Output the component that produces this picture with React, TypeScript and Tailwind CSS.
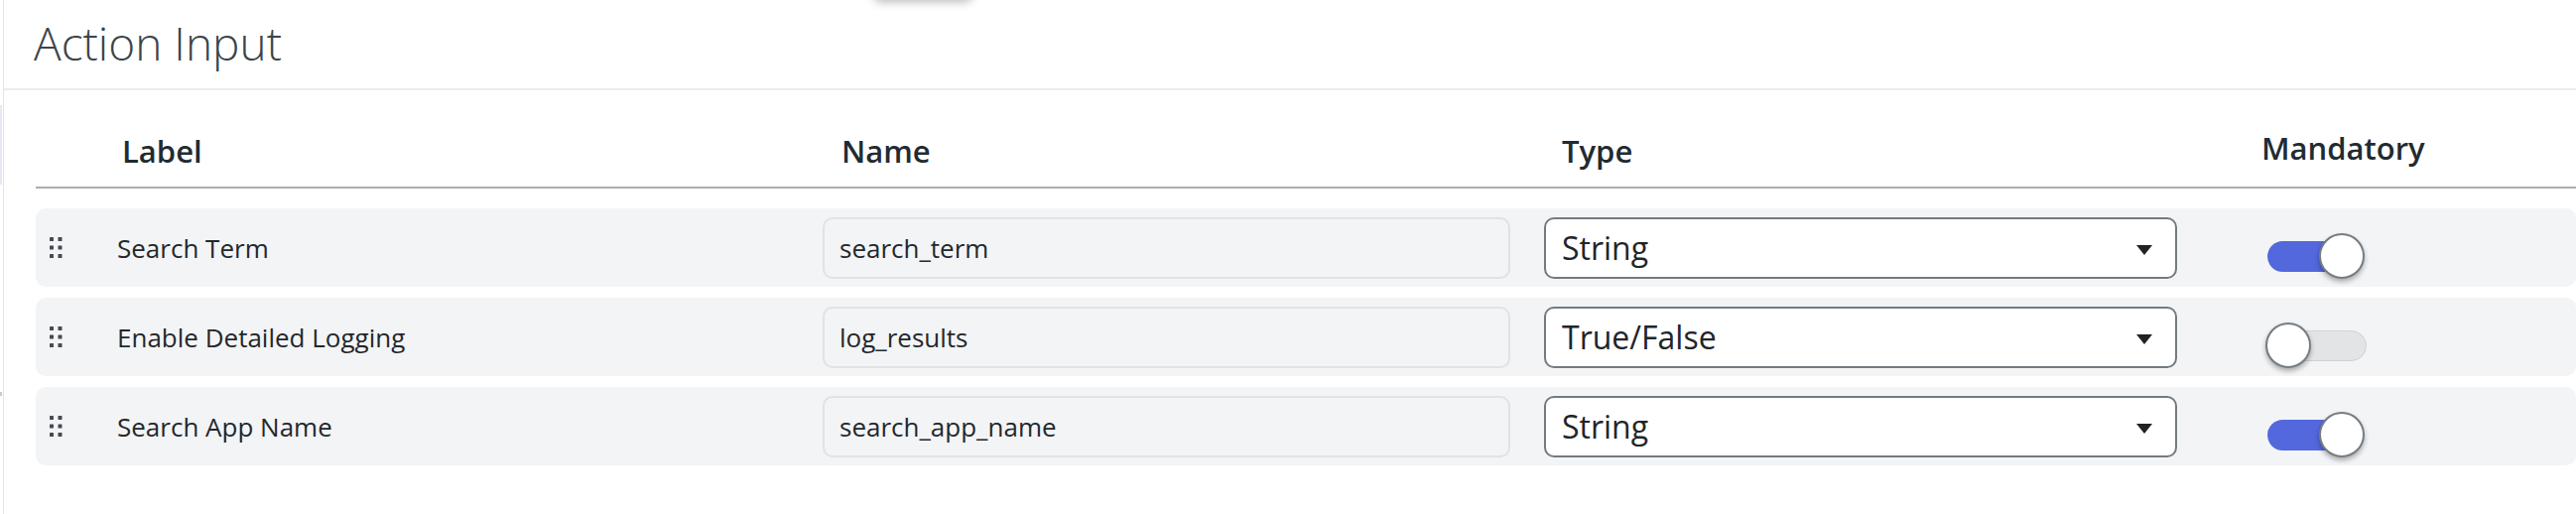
import React from "react";

type Row = { label: string; name: string; type: string; on: boolean };

const rows: Row[] = [
  { label: "Search Term", name: "search_term", type: "String", on: true },
  { label: "Enable Detailed Logging", name: "log_results", type: "True/False", on: false },
  { label: "Search App Name", name: "search_app_name", type: "String", on: true },
];

function Handle() {
  return (
    <svg width="13" height="21" viewBox="0 0 13 21" className="block">
      {[0, 8.5, 17].map((y) =>
        [0, 8.5].map((x) => (
          <rect key={`${x}-${y}`} x={x} y={y} width="4" height="4" rx="0.6" fill="#454b51" />
        ))
      )}
    </svg>
  );
}

function Caret() {
  return (
    <svg width="16" height="10" viewBox="0 0 16 10" className="block">
      <path d="M0 0 L16 0 L8 10 Z" fill="#1f2326" />
    </svg>
  );
}

function Toggle({ on }: { on: boolean }) {
  return (
    <div className="relative mt-[16px] h-[46px] w-[102px]">
      <div
        className={
          on
            ? "absolute left-[2px] top-[8px] h-[31px] w-[92px] rounded-full bg-[#5368dd]"
            : "absolute left-[2px] top-[8px] h-[31px] w-[100px] rounded-full border border-[#cfd1d3] bg-[#e3e4e6]"
        }
      />
      <div
        className={
          on
            ? "absolute left-[54px] top-0 h-[46px] w-[46px] rounded-full border-2 border-[#767d82] bg-white shadow-[0_3px_5px_rgba(0,0,0,0.3)]"
            : "absolute left-0 top-0 h-[46px] w-[46px] rounded-full border-2 border-[#767d82] bg-white shadow-[0_3px_5px_rgba(0,0,0,0.3)]"
        }
      />
    </div>
  );
}

export default function App() {
  return (
    <div className="relative h-[518px] w-[2596px] overflow-hidden bg-white font-['Open_Sans',sans-serif]">
      {/* floating element shadow at the top edge */}
      <div className="absolute left-[880px] top-[-44px] h-[44px] w-[100px] rounded-[8px] bg-white shadow-[0_2px_10px_rgba(0,0,0,0.28)]" />
      {/* left edge tint */}
      <div className="absolute left-0 top-[106px] h-[80px] w-[2px] bg-[#e6e8f6]" />
      <div className="absolute left-0 top-[395px] h-[4px] w-[2px] bg-[#c9c9c9]" />

      <div className="ml-[3px] h-full border-l border-[#e4e4e4]">
        <div className="h-[91px] border-b-2 border-[#ebebeb] pl-[30px] pt-[12px]">
          <h1 className="text-[46px] font-light leading-[63px] text-[#3b4449]">Action Input</h1>
        </div>

        <div className="pl-[32px]">
          <div className="grid grid-cols-[87px_725px_726px_705px_1fr] items-start border-b-2 border-[#a9aeb1] pb-[16px] pt-[41px] text-[31px] font-semibold leading-[40px] text-[#222b31]">
            <div />
            <div>Label</div>
            <div>Name</div>
            <div>Type</div>
            <div className="-mt-[3px]">Mandatory</div>
          </div>

          <div className="flex flex-col gap-[11px] pt-[20px]">
            {rows.map((r) => (
              <div
                key={r.name}
                className="grid h-[79px] grid-cols-[82px_711px_727px_727px_1fr] items-center rounded-[10px] bg-[#f3f4f6]"
              >
                <div className="pl-[14px]">
                  <Handle />
                </div>
                <div className="text-[26px] leading-[36px] text-[#23282c]">{r.label}</div>
                <div className="flex h-[62px] w-[693px] items-center rounded-[10px] border-2 border-[#e0e2e5] pl-[15px] text-[26px] leading-[36px] text-[#23282c]">
                  {r.name}
                </div>
                <div className="flex h-[62px] w-[638px] items-center justify-between rounded-[10px] border-2 border-[#737b80] bg-white pl-[16px] pr-[23px] text-[32px] leading-[44px] text-[#212529]">
                  <span>{r.type}</span>
                  <span className="mt-[4px]">
                    <Caret />
                  </span>
                </div>
                <div>
                  <Toggle on={r.on} />
                </div>
              </div>
            ))}
          </div>
        </div>
      </div>
    </div>
  );
}
